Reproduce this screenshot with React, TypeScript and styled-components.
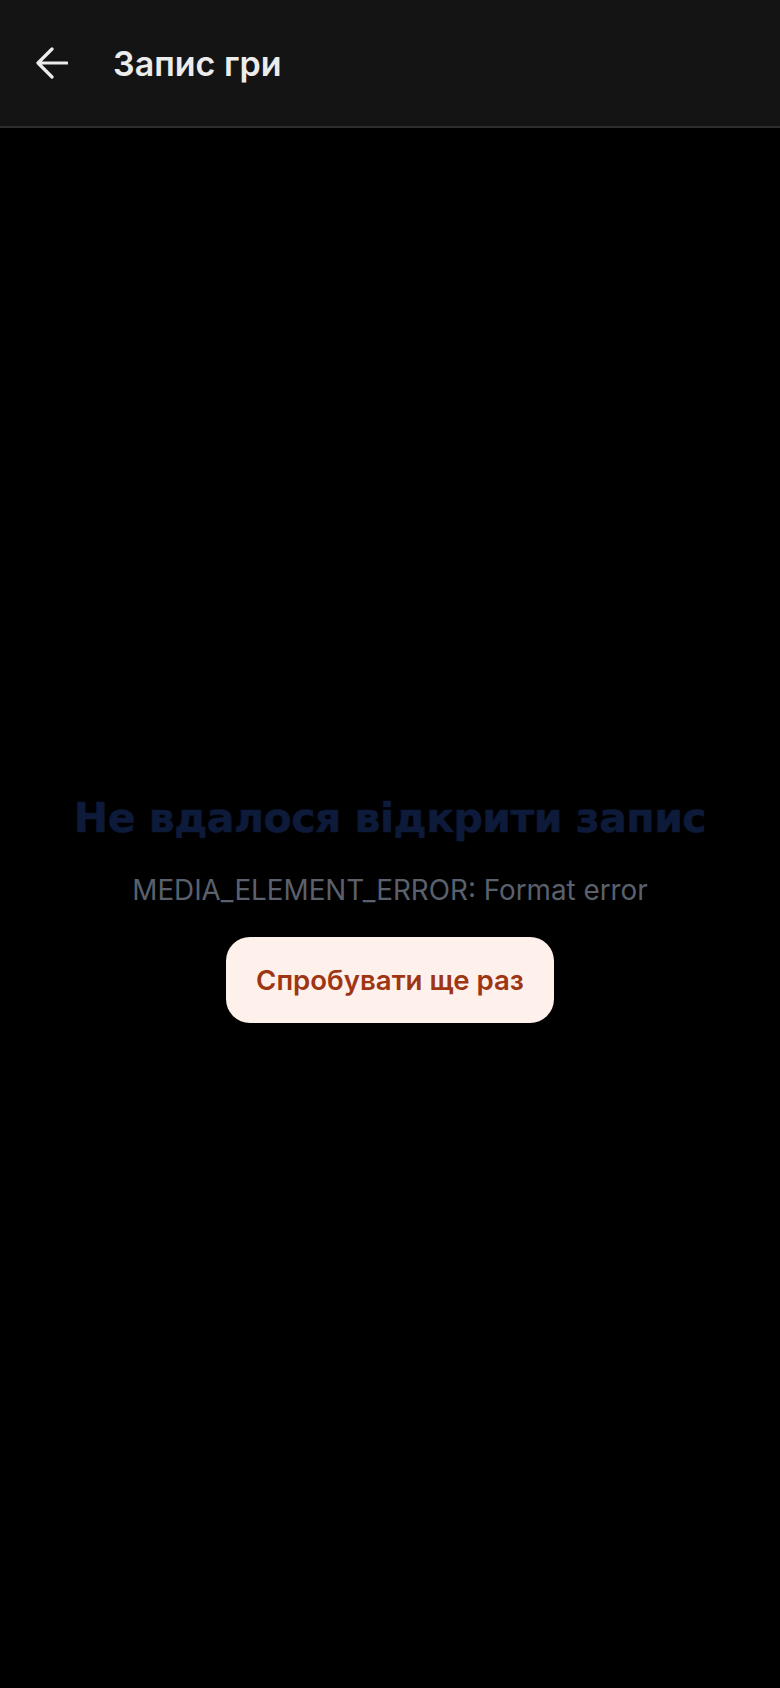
import styled, { createGlobalStyle } from "styled-components";

const GlobalStyle = createGlobalStyle`
  html, body {
    margin: 0;
    padding: 0;
    background: #000;
  }
  body {
    font-family: Inter, "Noto Sans", sans-serif;
  }
  #root {
    min-height: 100vh;
  }
`;

const Page = styled.div`
  min-height: 100vh;
  display: flex;
  flex-direction: column;
  background: #000;
`;

const Header = styled.header`
  height: 126px;
  flex-shrink: 0;
  display: flex;
  align-items: center;
  gap: 45px;
  padding: 0 36px;
  background: #141414;
  border-bottom: 2px solid #2e2e2e;
`;

const BackButton = styled.button`
  width: 32px;
  height: 32px;
  padding: 0;
  border: none;
  background: none;
  color: #ececec;
  display: flex;
  align-items: center;
  justify-content: center;
  cursor: pointer;
`;

const Title = styled.h1`
  margin: 0;
  font-family: Inter, "Noto Sans", sans-serif;
  font-size: 34px;
  font-weight: 600;
  color: #ececec;
`;

const Body = styled.main`
  flex: 1;
  display: flex;
  flex-direction: column;
  align-items: center;
  justify-content: center;
  text-align: center;
`;

const ErrorTitle = styled.h2`
  margin: 0;
  font-family: "DejaVu Sans", sans-serif;
  font-size: 41px;
  font-weight: 700;
  letter-spacing: -0.5px;
  color: #0d1a3a;
  -webkit-text-stroke: 0.6px #0d1a3a;
`;

const ErrorText = styled.p`
  margin: 31px 0 0;
  font-family: Inter, "Noto Sans", sans-serif;
  font-size: 27.8px;
  font-weight: 400;
  color: #5a616d;
`;

const RetryButton = styled.button`
  margin-top: 30px;
  width: 328px;
  height: 86px;
  border: none;
  border-radius: 24px;
  background: #fef0eb;
  color: #9e3613;
  font-family: Inter, "Noto Sans", sans-serif;
  font-size: 27.6px;
  font-weight: 600;
  cursor: pointer;
`;

export default function App() {
  return (
    <>
      <GlobalStyle />
      <Page>
        <Header>
          <BackButton aria-label="Назад">
            <svg width="32" height="32" viewBox="0 0 32 32" fill="none">
              <path
                d="M31 16H2M16 2 2 16l14 14"
                stroke="currentColor"
                strokeWidth="3.2"
                strokeLinecap="round"
                strokeLinejoin="round"
              />
            </svg>
          </BackButton>
          <Title>Запис гри</Title>
        </Header>
        <Body>
          <ErrorTitle>Не вдалося відкрити запис</ErrorTitle>
          <ErrorText>MEDIA_ELEMENT_ERROR: Format error</ErrorText>
          <RetryButton>Спробувати ще раз</RetryButton>
        </Body>
      </Page>
    </>
  );
}
